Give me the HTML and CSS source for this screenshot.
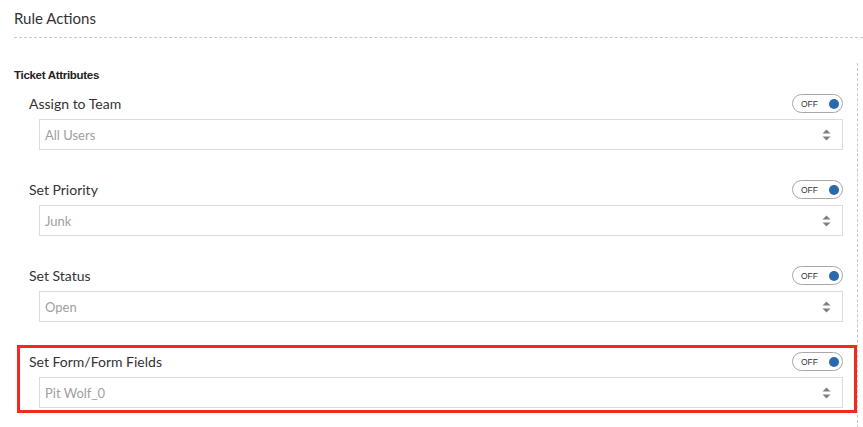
FILE: index.html
```html
<!DOCTYPE html>
<html>
<head>
<meta charset="utf-8">
<link rel="stylesheet" href="styles.css">
</head>
<body>
<div class="page">
  <div class="header">
    <h2 class="title">Rule Actions</h2>
  </div>
  <div class="section">
    <div class="section-title">Ticket Attributes</div>
    <div class="rows">
      <div class="row">
        <div class="row-head">
          <span class="label">Assign to Team</span>
          <span class="toggle"><span class="toggle-text">OFF</span><span class="dot"></span></span>
        </div>
        <div class="select"><span class="placeholder">All Users</span><span class="caret"><svg width="9" height="12" viewBox="0 0 9 12"><path d="M4.5 0.5 L8.5 4.5 L0.5 4.5 Z" /><path d="M0.5 7.5 L8.5 7.5 L4.5 11.5 Z" /></svg></span></div>
      </div>
      <div class="row">
        <div class="row-head">
          <span class="label">Set Priority</span>
          <span class="toggle"><span class="toggle-text">OFF</span><span class="dot"></span></span>
        </div>
        <div class="select"><span class="placeholder">Junk</span><span class="caret"><svg width="9" height="12" viewBox="0 0 9 12"><path d="M4.5 0.5 L8.5 4.5 L0.5 4.5 Z" /><path d="M0.5 7.5 L8.5 7.5 L4.5 11.5 Z" /></svg></span></div>
      </div>
      <div class="row">
        <div class="row-head">
          <span class="label">Set Status</span>
          <span class="toggle"><span class="toggle-text">OFF</span><span class="dot"></span></span>
        </div>
        <div class="select"><span class="placeholder">Open</span><span class="caret"><svg width="9" height="12" viewBox="0 0 9 12"><path d="M4.5 0.5 L8.5 4.5 L0.5 4.5 Z" /><path d="M0.5 7.5 L8.5 7.5 L4.5 11.5 Z" /></svg></span></div>
      </div>
      <div class="row highlight">
        <div class="row-head">
          <span class="label">Set Form/Form Fields</span>
          <span class="toggle"><span class="toggle-text">OFF</span><span class="dot"></span></span>
        </div>
        <div class="select"><span class="placeholder">Pit Wolf_0</span><span class="caret"><svg width="9" height="12" viewBox="0 0 9 12"><path d="M4.5 0.5 L8.5 4.5 L0.5 4.5 Z" /><path d="M0.5 7.5 L8.5 7.5 L4.5 11.5 Z" /></svg></span></div>
      </div>
    </div>
  </div>
</div>
</body>
</html>
```
FILE: styles.css
```css
html, body {
  margin: 0;
  padding: 0;
  background: #fff;
}
body {
  font-family: Lato, "Open Sans", "Liberation Sans", sans-serif;
  color: #333;
  overflow: hidden;
}
.page {
  padding-left: 14px;
}
.header {
  border-bottom: 1px dashed #c8c8c8;
  height: 38px;
  box-sizing: border-box;
}
.title {
  margin: 0;
  padding-top: 8px;
  font-size: 15px;
  font-weight: 400;
  line-height: 20px;
  color: #333;
}
.section {
  margin-top: 25px;
  width: 844px;
  border-right: 1px dashed #c8c8c8;
  box-sizing: border-box;
  padding-right: 14px;
  padding-bottom: 20px;
}
.section-title {
  font-family: "Liberation Sans", Arial, sans-serif;
  font-size: 11.5px;
  font-weight: 700;
  color: #222;
  line-height: 14px;
  padding-top: 5px;
  letter-spacing: -0.3px;
}
.rows {
  display: flex;
  flex-direction: column;
  gap: 30px;
  padding-left: 15px;
  margin-top: 12px;
}
.row {
  display: flex;
  flex-direction: column;
  gap: 6px;
  position: relative;
}
.row-head {
  display: flex;
  align-items: center;
  justify-content: space-between;
  height: 19px;
}
.label {
  font-size: 14px;
  color: #333;
}
.toggle {
  width: 51px;
  height: 19px;
  box-sizing: border-box;
  border: 1px solid #a8a8a8;
  border-radius: 10px;
  display: flex;
  align-items: center;
  justify-content: space-between;
  padding: 0 3px 0 8px;
}
.toggle-text {
  font-family: "Liberation Sans", Arial, sans-serif;
  font-size: 8.5px;
  color: #333;
}
.dot {
  width: 10px;
  height: 10px;
  border-radius: 50%;
  background: #2a69ab;
}
.select {
  margin-left: 10px;
  height: 31px;
  border: 1px solid #dcdcdc;
  box-sizing: border-box;
  display: flex;
  align-items: center;
  justify-content: space-between;
  padding: 0 11px 0 5px;
}
.placeholder {
  font-size: 13px;
  color: #a0a0a0;
}
.caret {
  display: flex;
}
.caret svg {
  fill: #808080;
}
.highlight::after {
  content: "";
  position: absolute;
  left: -12px;
  right: -14px;
  top: -7px;
  bottom: -5px;
  border: 3px solid #f5281e;
  pointer-events: none;
}
```
